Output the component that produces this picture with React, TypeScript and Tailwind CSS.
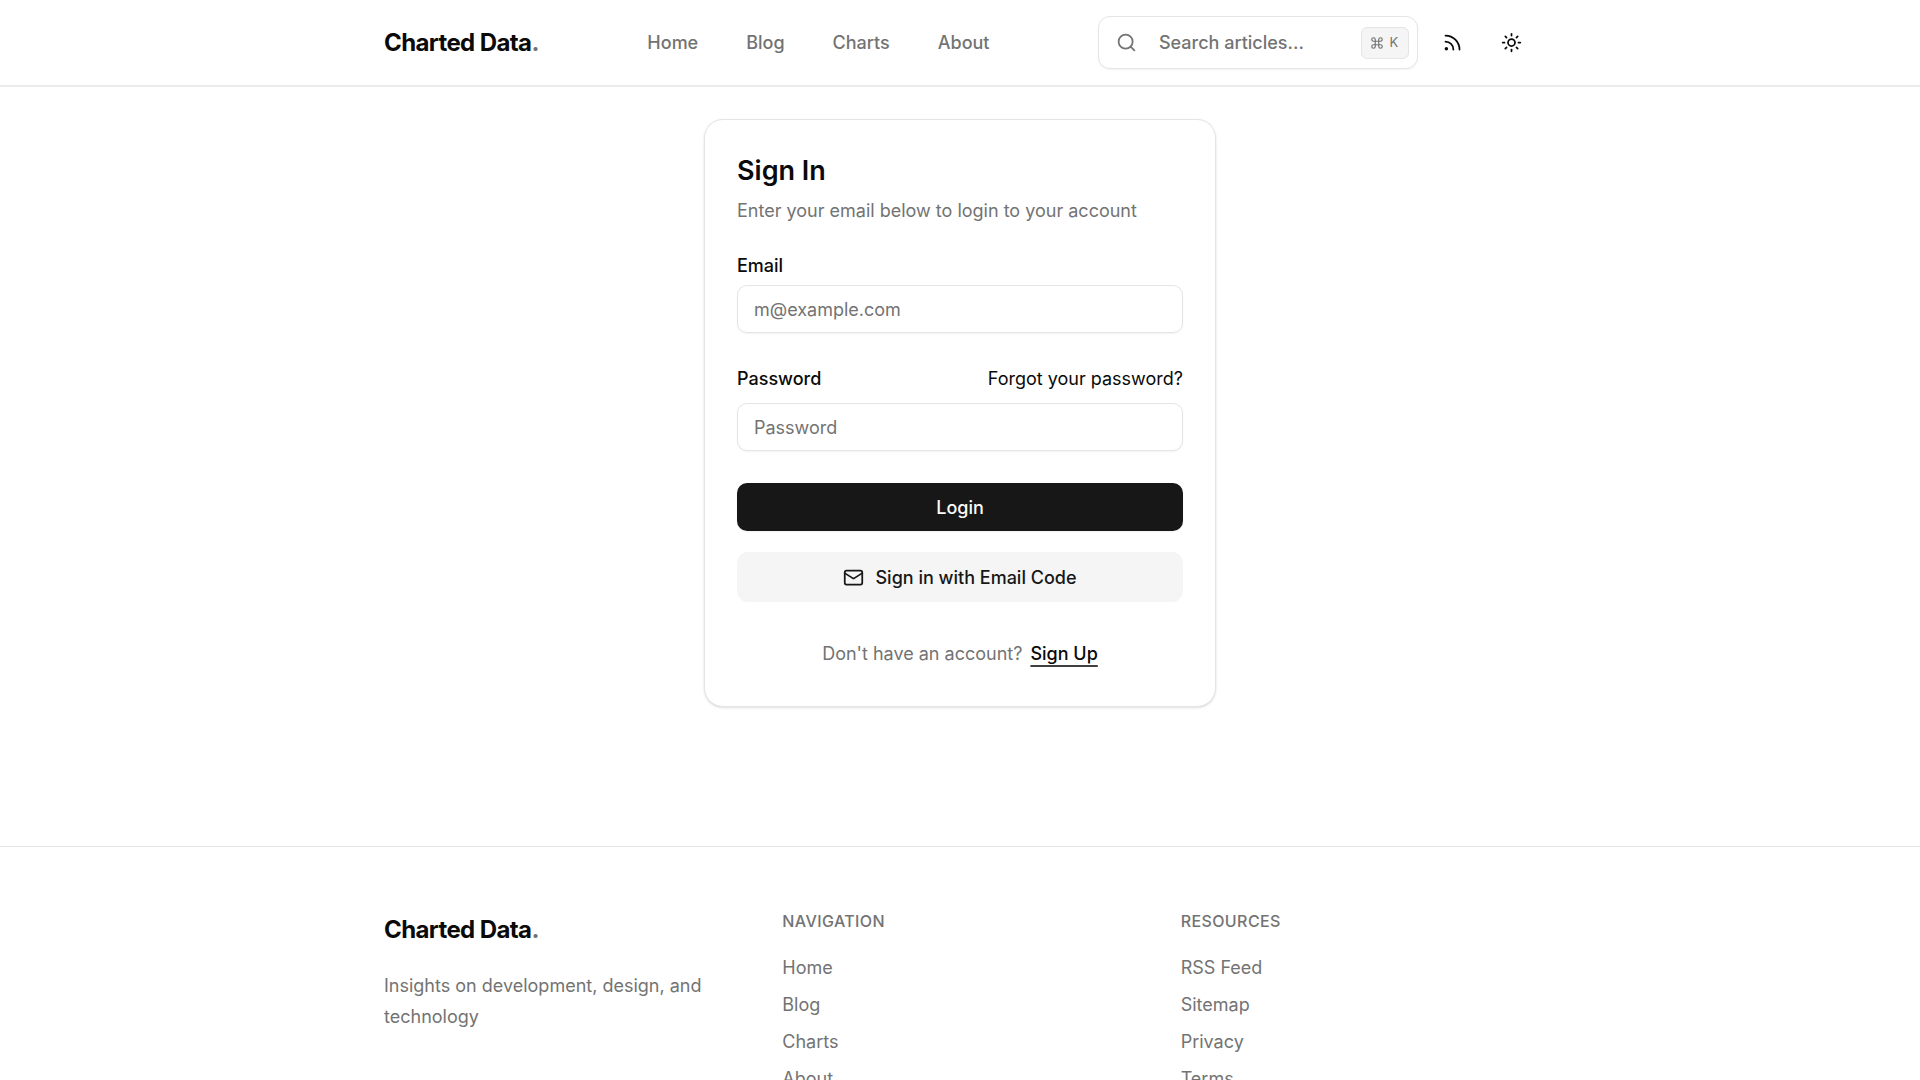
import { useState } from 'react';
import type { FormEvent } from 'react';
import { Command, Mail, Rss, Search, Sun } from 'lucide-react';

const NAV_LINKS = [
  { label: 'Home', href: '#home' },
  { label: 'Blog', href: '#blog' },
  { label: 'Charts', href: '#charts' },
  { label: 'About', href: '#about' },
];

const RESOURCE_LINKS = [
  { label: 'RSS Feed', href: '#rss' },
  { label: 'Sitemap', href: '#sitemap' },
  { label: 'Privacy', href: '#privacy' },
  { label: 'Terms', href: '#terms' },
];

const INPUT_CLASS =
  'w-full h-12 rounded-[10px] border border-[#e5e5e5] bg-white px-4 text-[18px] text-neutral-950 shadow-xs placeholder:text-[#737373] focus:outline-none focus:ring-2 focus:ring-neutral-300';

function Logo() {
  return (
    <a href="#home" className="text-[24px] leading-8 font-bold tracking-tight text-neutral-950">
      Charted Data<span className="text-[#737373]">.</span>
    </a>
  );
}

function Header() {
  return (
    <header className="border-b-2 border-[#ebebeb]">
      <div className="max-w-[1152px] h-[85px] mx-auto flex items-center justify-between">
        <Logo />
        <nav className="flex gap-12">
          {NAV_LINKS.map(link => (
            <a key={link.label} href={link.href} className="text-[18px] font-medium text-[#737373] hover:text-neutral-950">
              {link.label}
            </a>
          ))}
        </nav>
        <div className="flex items-center gap-[11px]">
          <button
            type="button"
            className="w-80 h-[53px] flex items-center rounded-xl border border-[#e5e5e5] bg-white pl-[17px] pr-2 text-[18px] font-medium text-[#737373] shadow-xs"
          >
            <Search className="w-[21px] h-[21px]" strokeWidth={2} />
            <span className="ml-[22px]">Search articles...</span>
            <kbd className="ml-auto h-8 flex items-center gap-1 rounded-md border border-[#e5e5e5] bg-neutral-100 px-2 font-['Inter',sans-serif] text-[13px] font-normal">
              <Command className="w-[14px] h-[14px]" />
              <span className="w-3 text-center">K</span>
            </kbd>
          </button>
          <button type="button" aria-label="RSS feed" className="w-12 h-12 flex items-center justify-center rounded-lg hover:bg-neutral-100">
            <Rss className="w-[21px] h-[21px]" />
          </button>
          <button type="button" aria-label="Toggle theme" className="w-12 h-12 flex items-center justify-center rounded-lg hover:bg-neutral-100">
            <Sun className="w-[21px] h-[21px]" />
          </button>
        </div>
      </div>
    </header>
  );
}

function SignInCard() {
  const [email, setEmail] = useState('');
  const [password, setPassword] = useState('');

  const handleSubmit = (e: FormEvent) => e.preventDefault();

  return (
    <div className="w-full max-w-lg rounded-[19px] border border-[#e5e5e5] bg-white p-8 shadow-sm">
      <h1 className="pt-[3px] text-[27px] leading-8 font-semibold">Sign In</h1>
      <p className="mt-2 text-[18px] leading-8 text-[#737373]">Enter your email below to login to your account</p>

      <form onSubmit={handleSubmit}>
        <label htmlFor="email" className="block mt-[27px] text-[18px] leading-6 font-medium">Email</label>
        <input
          id="email"
          type="email"
          value={email}
          onChange={e => setEmail(e.target.value)}
          placeholder="m@example.com"
          className={`mt-[7px] ${INPUT_CLASS}`}
        />

        <div className="flex items-center justify-between mt-8 text-[18px] leading-7">
          <label htmlFor="password" className="font-medium">Password</label>
          <a href="#forgot" className="hover:underline">Forgot your password?</a>
        </div>
        <input
          id="password"
          type="password"
          value={password}
          onChange={e => setPassword(e.target.value)}
          placeholder="Password"
          className={`mt-[10px] ${INPUT_CLASS}`}
        />

        <button type="submit" className="w-full h-12 mt-8 rounded-[10px] bg-neutral-900 text-[18px] font-medium text-neutral-50 shadow-xs hover:bg-neutral-800">
          Login
        </button>
        <button type="button" className="w-full h-[50px] mt-[21px] flex items-center justify-center gap-[11px] rounded-[11px] bg-[#f5f5f5] text-[18px] font-medium text-neutral-900 hover:bg-neutral-200">
          <Mail className="w-[21px] h-[21px]" />
          Sign in with Email Code
        </button>
      </form>

      <p className="mt-9 mb-1 flex justify-center gap-2 text-[18px] leading-8 text-[#737373]">
        Don't have an account?
        <a href="#signup" className="font-medium text-neutral-950 underline decoration-[#404040] decoration-2 underline-offset-[5px]">Sign Up</a>
      </p>
    </div>
  );
}

function FooterColumn({ title, links }: { title: string; links: { label: string; href: string }[] }) {
  return (
    <div>
      <h2 className="text-[16px] leading-5 font-medium tracking-wide uppercase text-[#737373]">{title}</h2>
      <ul className="mt-6 space-y-[11px]">
        {links.map(link => (
          <li key={link.label} className="text-[18px] leading-[26px]">
            <a href={link.href} className="text-[#737373] hover:text-neutral-950">{link.label}</a>
          </li>
        ))}
      </ul>
    </div>
  );
}

export default function App() {
  return (
    <div className="bg-white font-['Inter',sans-serif] text-neutral-950">
      <Header />

      <main className="flex justify-center pt-8 pb-[139px]">
        <SignInCard />
      </main>

      <footer className="border-t border-[#e5e5e5]">
        <div className="max-w-[1152px] mx-auto grid grid-cols-3 gap-[43px] pt-16 pb-16">
          <div className="pt-[3px]">
            <Logo />
            <p className="mt-6 text-[18px] leading-[31px] text-[#737373]">
              Insights on development, design, and technology
            </p>
          </div>
          <FooterColumn title="Navigation" links={NAV_LINKS} />
          <FooterColumn title="Resources" links={RESOURCE_LINKS} />
        </div>
      </footer>
    </div>
  );
}
